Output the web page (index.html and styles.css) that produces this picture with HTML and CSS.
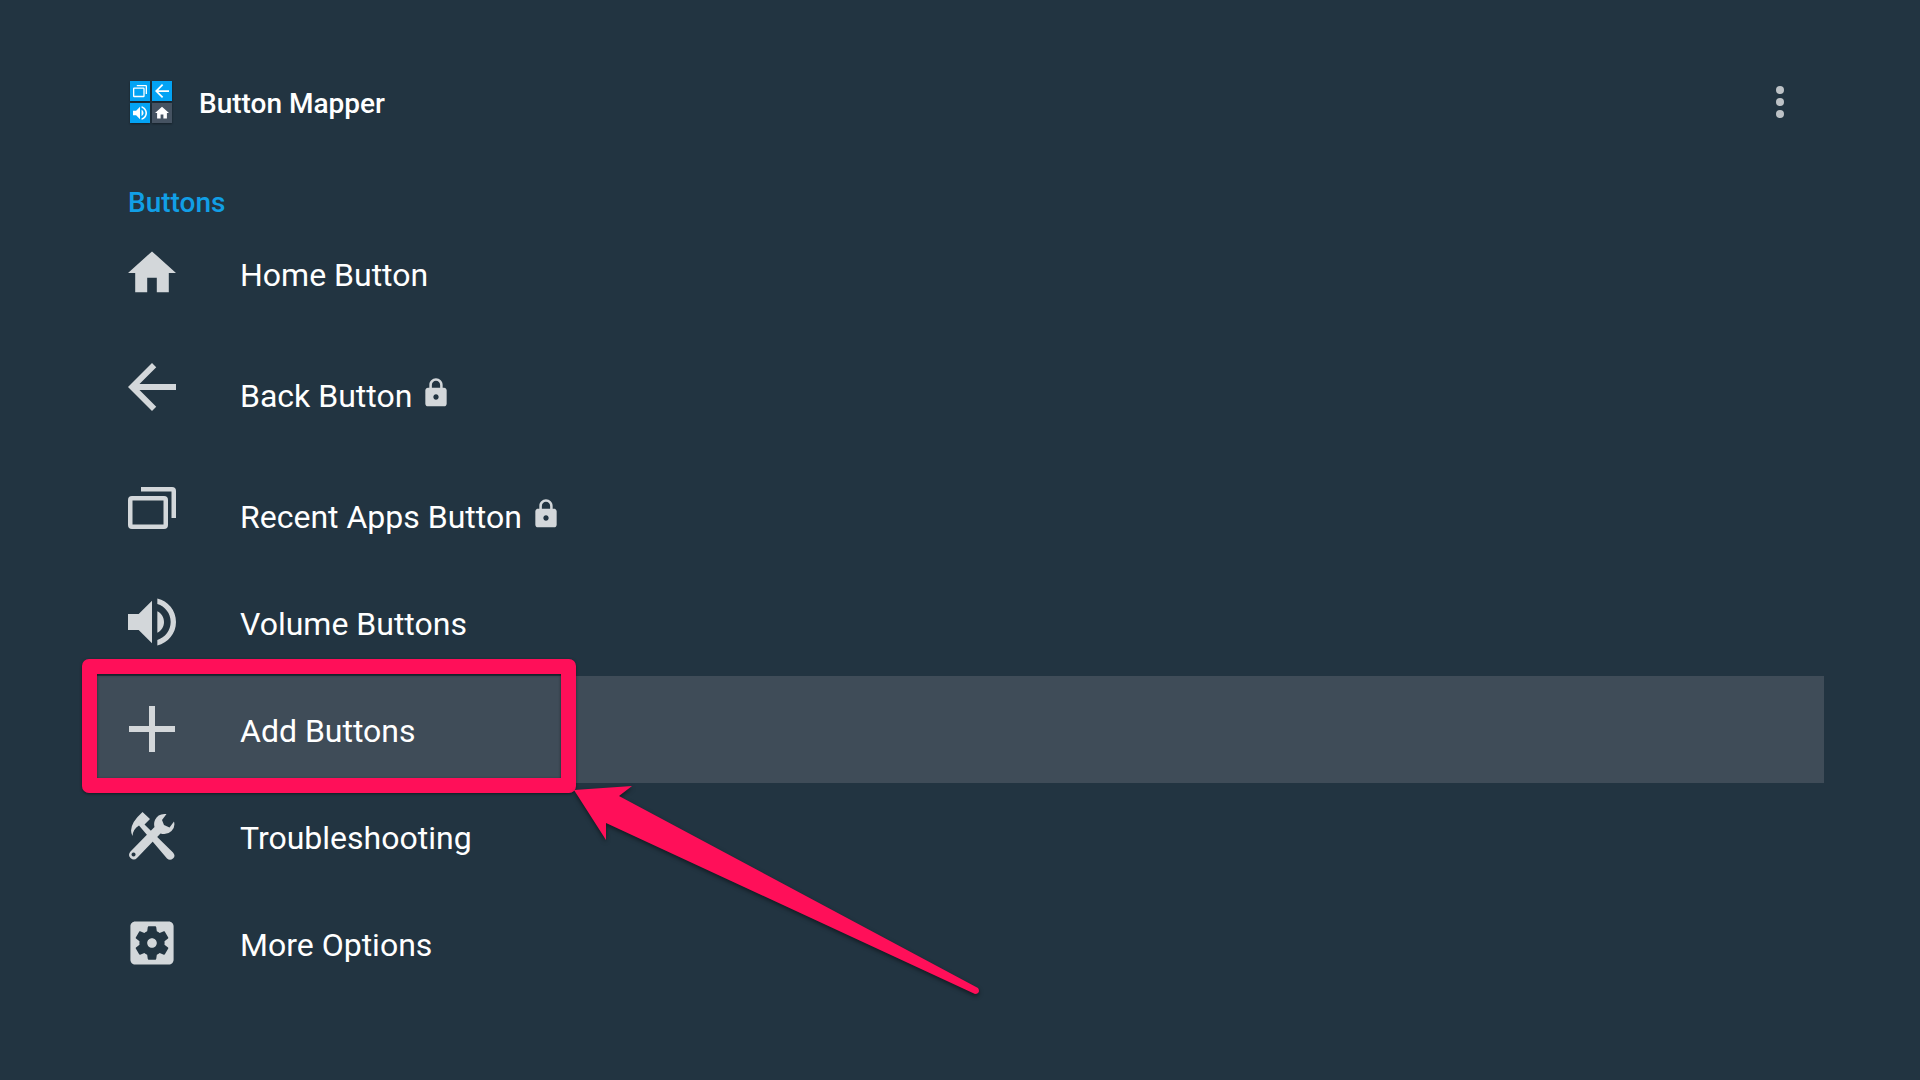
FILE: index.html
```
<!DOCTYPE html>
<html lang="en">

<head>
    <meta charset="UTF-8">
    <meta name="viewport" content="width=device-width, initial-scale=1.0">
    <title>Button Mapper</title>
    <link rel="stylesheet" href="styles.css">
</head>

<body>
    <!-- shapes used more than once -->
    <svg class="defs" aria-hidden="true">
        <symbol id="home" viewBox="2 2 20 20">
            <path d="M10 20v-6h4v6h5v-8h3L12 3 2 12h3v8z" />
        </symbol>
        <symbol id="back" viewBox="4 4 16 16">
            <path d="M20 11H7.83l5.59-5.59L12 4l-8 8 8 8 1.41-1.41L7.83 13H20v-2z" />
        </symbol>
        <symbol id="recent" viewBox="0 0 48 48">
            <path d="M13 3h31q4 0 4 4v27h-4.500V7.500H13z" />
            <path fill-rule="evenodd" d="M4 12h32q4 0 4 4v25q0 4-4 4H4q-4 0-4-4V16q0-4 4-4zM4.500 16.500v24h31v-24z" />
        </symbol>
        <symbol id="volume" viewBox="3 3 18 18">
            <path d="M3 9v6h4l5 5V4L7 9H3zm13.5 3c0-1.77-1.02-3.29-2.5-4.03v8.05c1.48-.73 2.5-2.25 2.5-4.02zM14 3.23v2.06c2.89.86 5 3.54 5 6.71s-2.11 5.85-5 6.71v2.06c4.01-.91 7-4.49 7-8.77s-2.99-7.86-7-8.77z" />
        </symbol>
        <symbol id="lock" viewBox="0 0 24 24">
            <path d="M18 8h-1V6c0-2.76-2.24-5-5-5S7 3.24 7 6v2H6c-1.1 0-2 .9-2 2v10c0 1.1.9 2 2 2h12c1.1 0 2-.9 2-2V10c0-1.1-.9-2-2-2zm-6 9c-1.1 0-2-.9-2-2s.9-2 2-2 2 .9 2 2-.9 2-2 2zm3.1-9H8.9V6c0-1.71 1.39-3.1 3.1-3.1s3.1 1.39 3.1 3.1v2z" />
        </symbol>
    </svg>

    <header>
        <div class="logo">
            <span><svg><use href="#recent" /></svg></span>
            <span><svg><use href="#back" /></svg></span>
            <span><svg><use href="#volume" /></svg></span>
            <span class="dark"><svg><use href="#home" /></svg></span>
        </div>
        <h1>Button Mapper</h1>
        <button type="button" class="menu" aria-label="More">
            <i></i><i></i><i></i>
        </button>
    </header>

    <main>
        <h2>Buttons</h2>
        <nav>
            <a href="#" class="row">
                <svg class="icon"><use href="#home" /></svg>
                <span>Home Button</span>
            </a>
            <a href="#" class="row tall">
                <svg class="icon"><use href="#back" /></svg>
                <span>Back Button</span>
                <svg class="lock"><use href="#lock" /></svg>
            </a>
            <a href="#" class="row tall">
                <svg class="icon"><use href="#recent" /></svg>
                <span>Recent Apps Button</span>
                <svg class="lock"><use href="#lock" /></svg>
            </a>
            <a href="#" class="row">
                <svg class="icon"><use href="#volume" /></svg>
                <span>Volume Buttons</span>
            </a>
            <a href="#" class="row selected">
                <svg class="icon" viewBox="0 0 48 48">
                    <path d="M21 1h6v20h20v6H27v20h-6V27H1v-6h20z" />
                </svg>
                <span>Add Buttons</span>
                <div class="frame"></div>
                <svg class="arrow" viewBox="0 0 420 220">
                    <path d="M4 8L62 4L49 14L408 206Q411 211 405 212L36 41V58z" />
                </svg>
            </a>
            <a href="#" class="row">
                <svg class="icon" viewBox="0 0 48 48">
                    <!-- hammer -->
                    <path d="M14.500 0L22 7L16.500 12.500L45 40.500Q48 44 45 46.500Q42 49 39 46.500L11 13.500Q5 17 4.500 24Q-1 14 14.500 0z" />
                    <!-- wrench -->
                    <path fill-rule="evenodd" d="M38.500 2Q30 1 27 8Q25.500 11 26.500 15L2.500 39.500Q-.500 43 2.500 46Q6 49 9 46L32.500 21.500Q39 23.500 43.500 19Q47.500 15 46 9.500L41.500 15.500L36 13L34 8zM5.500 40.500a2 2 0 1 0 .1 0z" />
                </svg>
                <span>Troubleshooting</span>
            </a>
            <a href="#" class="row">
                <svg class="icon" viewBox="2 2 20 20">
                    <path d="M12 10c-1.1 0-2 .9-2 2s.9 2 2 2 2-.9 2-2-.9-2-2-2zm7-7H5c-1.11 0-2 .9-2 2v14c0 1.1.89 2 2 2h14c1.11 0 2-.9 2-2V5c0-1.1-.89-2-2-2zm-1.75 9c0 .23-.02.46-.05.68l1.48 1.16c.13.11.17.3.08.45l-1.4 2.42c-.09.15-.27.21-.43.15l-1.74-.7c-.36.28-.76.51-1.18.69l-.26 1.85c-.03.17-.18.3-.35.3h-2.8c-.17 0-.32-.13-.35-.29l-.26-1.85c-.43-.18-.82-.41-1.18-.69l-1.74.7c-.16.06-.34 0-.43-.15l-1.4-2.42c-.09-.15-.05-.34.08-.45l1.48-1.16c-.03-.23-.05-.46-.05-.69 0-.23.02-.46.05-.68l-1.48-1.16c-.13-.11-.17-.3-.08-.45l1.4-2.42c.09-.15.27-.21.43-.15l1.74.7c.36-.28.76-.51 1.18-.69l.26-1.85c.03-.17.18-.3.35-.3h2.8c.17 0 .32.13.35.29l.26 1.85c.43.18.82.41 1.18.69l1.74-.7c.16-.06.34 0 .43.15l1.4 2.42c.09.15.05.34-.08.45l-1.48 1.16c.03.23.05.46.05.69z" />
                </svg>
                <span>More Options</span>
            </a>
        </nav>
    </main>
</body>

</html>
```
FILE: styles.css
```
* {
    box-sizing: border-box;
}

body {
    margin: 0;
    padding: 54px 96px;
    background-color: #223441;
    color: #fff;
    font-family: Roboto, sans-serif;
}

.defs {
    display: none;
}

header {
    display: flex;
    align-items: center;
    height: 96px;
    padding: 0 32px 0 34px;
}

.logo {
    display: grid;
    grid-template-columns: 20px 20px;
    gap: 2px;
    margin-right: 27px;
}

.logo span {
    display: flex;
    align-items: center;
    justify-content: center;
    height: 20px;
    background-color: #03a3f4;
    box-shadow: 0 1px 2px rgba(0, 0, 0, 0.4);
}

.logo .dark {
    background-color: #465362;
}

.logo svg {
    width: 14px;
    height: 14px;
    fill: #fff;
}

h1 {
    margin: 0;
    padding-top: 2px;
    font-size: 28px;
    font-weight: 500;
}

.menu {
    display: flex;
    flex-direction: column;
    align-items: center;
    gap: 4px;
    width: 24px;
    margin-left: auto;
    padding: 0;
    border: none;
    background: none;
    cursor: pointer;
}

.menu i {
    width: 8px;
    height: 8px;
    border-radius: 50%;
    background-color: #bdc2c6;
}

h2 {
    margin: 0;
    padding: 33px 32px 0;
    height: 70px;
    color: #119fe6;
    font-size: 28px;
    font-weight: 500;
    line-height: 40px;
}

.row {
    display: flex;
    align-items: center;
    position: relative;
    height: 107px;
    padding: 0 32px;
    color: #fff;
    font-size: 32px;
    line-height: 40px;
    text-decoration: none;
}

.row span {
    padding-top: 3px;
}

.tall {
    height: 121px;
}

.tall span {
    padding-top: 17px;
}

.icon {
    width: 48px;
    height: 48px;
    margin: 0 64px 2px 0;
    fill: #d3d7da;
}

.lock {
    width: 32px;
    height: 32px;
    margin: 10px 0 0 8px;
    fill: #d3d7da;
}

.selected {
    background-color: #3f4c58;
}

/* callout round the selected row */
.frame {
    position: absolute;
    left: -14px;
    top: -17px;
    width: 494px;
    height: 134px;
    border: 15px solid #ff0f59;
    border-radius: 7px;
    box-shadow: 0 1px 3px rgba(0, 0, 0, 0.5), inset 0 1px 3px rgba(0, 0, 0, 0.5);
}

.arrow {
    position: absolute;
    left: 474px;
    top: 106px;
    width: 420px;
    height: 220px;
    z-index: 1;
    fill: #ff0f59;
    filter: drop-shadow(0 2px 2px rgba(0, 0, 0, 0.5));
    pointer-events: none;
}
```
